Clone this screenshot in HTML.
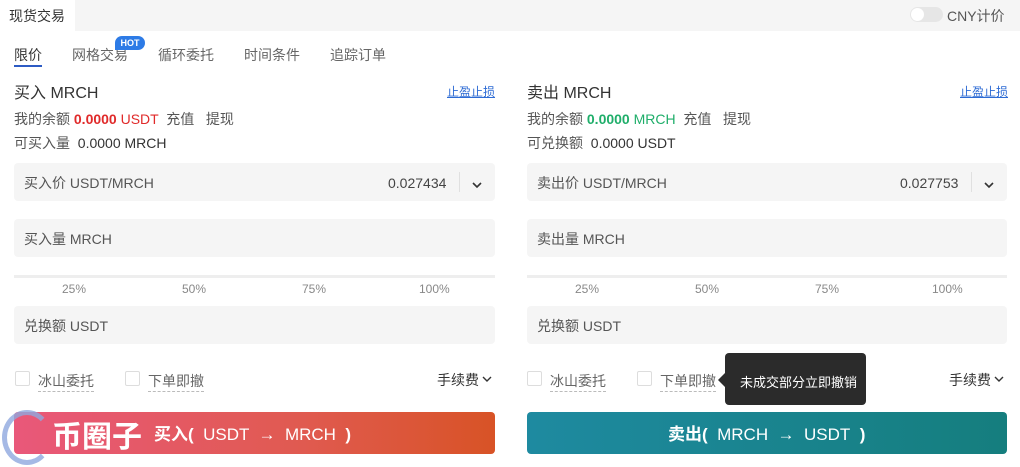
<!DOCTYPE html>
<html><head><meta charset="utf-8"><style>
*{margin:0;padding:0;box-sizing:border-box}
body{width:1020px;height:467px;background:#fff;font-family:"Liberation Sans","Noto Sans CJK SC",sans-serif;color:#333;position:relative;overflow:hidden;font-size:14px}
.a{position:absolute;white-space:nowrap}
.top{left:0;top:0;width:1020px;height:31px;background:#f5f5f5}
.inp{position:absolute;height:38px;background:#f5f5f5;border-radius:4px;font-size:14px;color:#555;line-height:40px;padding-left:10px}
.pct{position:absolute;font-size:12px;color:#888}
.cb{position:absolute;width:15px;height:15px;border:1px solid #ddd;border-radius:2px;background:#fff}
.ul{border-bottom:1px dashed #bbb}
svg{position:absolute}
</style></head><body>
<div class="a top"></div>
<div class="a" style="left:0;top:0;width:75px;height:31px;background:#fff"></div>
<div class="a" style="left:9px;top:6px;font-size:14px;color:#333">现货交易</div>
<div class="a" style="left:910px;top:7px;width:33px;height:15px;border-radius:8px;background:#e6e6e6"></div>
<div class="a" style="left:911px;top:8px;width:13px;height:13px;border-radius:50%;background:#fff"></div>
<div class="a" style="left:947px;top:6px;font-size:14px;color:#555">CNY计价</div>

<div class="a" style="left:14px;top:45px;font-size:14px;color:#333">限价</div>
<div class="a" style="left:14px;top:65px;width:28px;height:2px;background:#2d5bc4"></div>
<div class="a" style="left:72px;top:45px;color:#666">网格交易</div>
<div class="a" style="left:115px;top:36px;width:30px;height:14px;border-radius:7px 7px 7px 0;background:#2d7be6;color:#fff;font-size:9px;font-weight:bold;text-align:center;line-height:14px">HOT</div>
<div class="a" style="left:158px;top:45px;color:#666">循环委托</div>
<div class="a" style="left:244px;top:45px;color:#666">时间条件</div>
<div class="a" style="left:330px;top:45px;color:#666">追踪订单</div>

<!-- left -->
<div class="a" style="left:14px;top:79px;font-size:16px;color:#333">买入 MRCH</div>
<div class="a" style="left:447px;top:83px;font-size:12px;color:#2d6bd4;text-decoration:underline">止盈止损</div>
<div class="a" style="left:14px;top:109px;color:#555">我的余额 <b style="color:#e02a2a">0.0000</b> <span style="color:#e02a2a">USDT</span> &nbsp;充值 &nbsp; 提现</div>
<div class="a" style="left:14px;top:133px;color:#555">可买入量 &nbsp;<span style="color:#333">0.0000 MRCH</span></div>
<div class="inp" style="left:14px;top:163px;width:481px">买入价 USDT/MRCH</div>
<div class="a" style="left:388px;top:175px;color:#444">0.027434</div>
<div class="a" style="left:459px;top:172px;width:1px;height:20px;background:#e0e0e0"></div>
<svg style="left:471px;top:181px" width="12" height="8"><path d="M2 2l4 4 4-4" stroke="#333" stroke-width="1.6" fill="none"/></svg>
<div class="inp" style="left:14px;top:219px;width:481px">买入量 MRCH</div>
<div class="a" style="left:14px;top:275px;width:481px;height:3px;background:#eee"></div>
<div class="pct" style="left:62px;top:282px">25%</div><div class="pct" style="left:182px;top:282px">50%</div><div class="pct" style="left:302px;top:282px">75%</div><div class="pct" style="left:419px;top:282px">100%</div>
<div class="inp" style="left:14px;top:306px;width:481px">兑换额 USDT</div>
<div class="cb" style="left:15px;top:371px"></div><div class="a ul" style="left:38px;top:371px;color:#666">冰山委托</div>
<div class="cb" style="left:125px;top:371px"></div><div class="a ul" style="left:148px;top:371px;color:#666">下单即撤</div>
<div class="a" style="left:437px;top:370px;color:#333">手续费</div>
<svg style="left:481px;top:375px" width="12" height="8"><path d="M2 2l4 4 4-4" stroke="#333" stroke-width="1.4" fill="none"/></svg>
<div class="a" style="left:14px;top:412px;width:481px;height:42px;border-radius:4px;background:linear-gradient(90deg,#e9587a,#e05a50 60%,#d85326)"></div>
<div class="a" style="left:2px;top:410px;width:50px;height:55px;border-radius:50%;border:5px solid #8fa8df;border-right-color:transparent;opacity:.8"></div>
<div class="a" style="left:52px;top:412px;font-size:30px;font-weight:bold;color:#fff">币圈子</div>
<div class="a" style="left:154px;top:420px;font-size:17px;font-weight:bold;color:#fff">买入( &nbsp;<span style="font-weight:normal">USDT &nbsp;→ &nbsp;MRCH</span> &nbsp;)</div>

<!-- right -->
<div class="a" style="left:527px;top:79px;font-size:16px;color:#333">卖出 MRCH</div>
<div class="a" style="left:960px;top:83px;font-size:12px;color:#2d6bd4;text-decoration:underline">止盈止损</div>
<div class="a" style="left:527px;top:109px;color:#555">我的余额 <b style="color:#1fae6a">0.0000</b> <span style="color:#1fae6a">MRCH</span> &nbsp;充值 &nbsp; 提现</div>
<div class="a" style="left:527px;top:133px;color:#555">可兑换额 &nbsp;<span style="color:#333">0.0000 USDT</span></div>
<div class="inp" style="left:527px;top:163px;width:480px">卖出价 USDT/MRCH</div>
<div class="a" style="left:900px;top:175px;color:#444">0.027753</div>
<div class="a" style="left:971px;top:172px;width:1px;height:20px;background:#e0e0e0"></div>
<svg style="left:983px;top:181px" width="12" height="8"><path d="M2 2l4 4 4-4" stroke="#333" stroke-width="1.6" fill="none"/></svg>
<div class="inp" style="left:527px;top:219px;width:480px">卖出量 MRCH</div>
<div class="a" style="left:527px;top:275px;width:480px;height:3px;background:#eee"></div>
<div class="pct" style="left:575px;top:282px">25%</div><div class="pct" style="left:695px;top:282px">50%</div><div class="pct" style="left:815px;top:282px">75%</div><div class="pct" style="left:932px;top:282px">100%</div>
<div class="inp" style="left:527px;top:306px;width:480px">兑换额 USDT</div>
<div class="cb" style="left:527px;top:371px"></div><div class="a ul" style="left:550px;top:371px;color:#666">冰山委托</div>
<div class="cb" style="left:637px;top:371px"></div><div class="a ul" style="left:660px;top:371px;color:#666">下单即撤</div>
<div class="a" style="left:949px;top:370px;color:#333">手续费</div>
<svg style="left:993px;top:375px" width="12" height="8"><path d="M2 2l4 4 4-4" stroke="#333" stroke-width="1.4" fill="none"/></svg>
<div class="a" style="left:725px;top:353px;width:141px;height:52px;border-radius:4px;background:#2b2b2b"></div>
<div class="a" style="left:718px;top:373px;width:0;height:0;border:7px solid transparent;border-right-color:#2b2b2b;border-left:0"></div>
<div class="a" style="left:740px;top:372px;font-size:13px;color:#fff">未成交部分立即撤销</div>
<div class="a" style="left:527px;top:412px;width:480px;height:42px;border-radius:4px;background:linear-gradient(90deg,#1e8aa0,#157e7e)"></div>
<div class="a" style="left:668px;top:420px;font-size:17px;font-weight:bold;color:#fff">卖出( &nbsp;<span style="font-weight:normal">MRCH &nbsp;→ &nbsp;USDT</span> &nbsp;)</div>
</body></html>
